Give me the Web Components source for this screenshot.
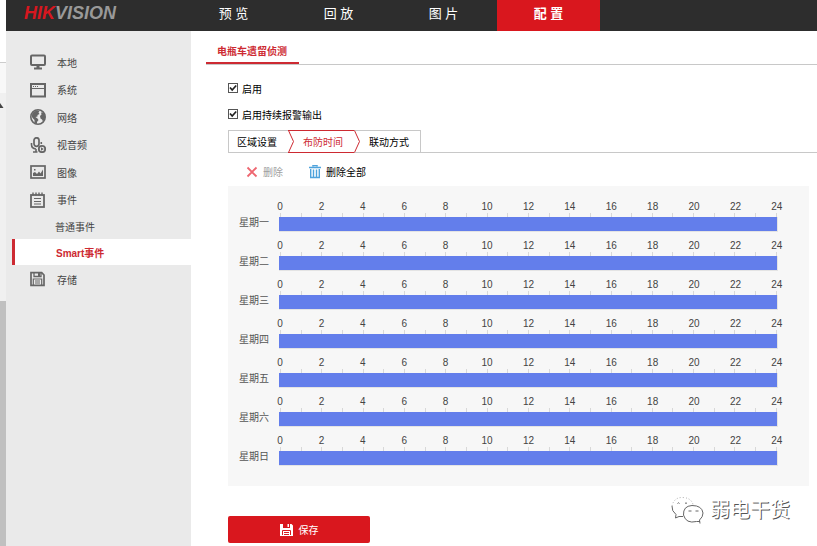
<!DOCTYPE html>
<html lang="zh-CN">
<head>
<meta charset="utf-8">
<title>HIKVISION</title>
<style>
  body {
    margin: 0;
    min-height: 100vh;
    display: flex;
    background: #fff;
    color: #000;
    font-family: "Liberation Sans", "Noto Sans CJK SC", sans-serif;
    font-size: 10px;
  }
  .page {
    flex: 1;
    min-width: 0;
    display: flex;
    flex-direction: column;
  }
  .columns {
    flex: 1;
    display: flex;
  }
</style>
</head>
<body>
<window-edge></window-edge>
<div class="page">
  <top-bar>
    <top-tab>预 览</top-tab>
    <top-tab>回 放</top-tab>
    <top-tab>图 片</top-tab>
    <top-tab active>配 置</top-tab>
  </top-bar>
  <div class="columns">
    <side-menu>
      <side-item icon="monitor">本地</side-item>
      <side-item icon="window">系统</side-item>
      <side-item icon="globe">网络</side-item>
      <side-item icon="mic">视音频</side-item>
      <side-item icon="image">图像</side-item>
      <side-item icon="notepad">事件</side-item>
      <side-item sub>普通事件</side-item>
      <side-item sub active>Smart事件</side-item>
      <side-item icon="disk">存储</side-item>
    </side-menu>
    <config-panel heading="电瓶车遗留侦测">
      <check-option name="enable">启用</check-option>
      <check-option name="alarm">启用持续报警输出</check-option>
      <step-tabs labels="区域设置,布防时间,联动方式" current="1"></step-tabs>
      <schedule-tools></schedule-tools>
      <week-schedule days="星期一,星期二,星期三,星期四,星期五,星期六,星期日"></week-schedule>
      <save-button>保存</save-button>
    </config-panel>
  </div>
</div>
<water-mark>弱电干货</water-mark>

<script>
const ICONS = {
  monitor: `<rect x="1" y="1.500" width="14" height="9.500" rx="1" fill="none" stroke="#666" stroke-width="2"/><path d="M6.500 11h3v2.500H12V15.500H4v-2h2.500z" fill="#666"/>`,
  window: `<rect x="1" y="2" width="14" height="12.500" fill="none" stroke="#666" stroke-width="2"/><path d="M1 6.500h14" stroke="#666"/><path d="M3 4.500h1M5 4.500h1M7 4.500h1" stroke="#666"/>`,
  globe: `<circle cx="8" cy="8" r="7.200" fill="#eaeaea" stroke="#666" stroke-width="1.600"/><path d="M1.500 6.500 3.500 3 7 1.200 9.500 2 8.500 3.500 9.500 5 7.500 6 7.500 7.500 5.500 8 7.500 9.500 8.500 11 7 13 7 15 4.500 13.500 4.500 11 2.500 9z" fill="#666"/><path d="M11 3.500 13.500 3.500 15 6.500 15 9 13 12.500 12 10.500 10.500 9.500 10 7 11.500 5.500z" fill="#666"/>`,
  mic: `<rect x="4" y="0.800" width="5" height="8.500" rx="2.500" fill="none" stroke="#666" stroke-width="1.700"/><path d="M1.500 6v1.500q0 4 4.500 4.500M11.300 5v2M6 12v3M3 15h4.500" fill="none" stroke="#666" stroke-width="1.600"/><circle cx="12" cy="12" r="3.200" fill="#eaeaea" stroke="#666" stroke-width="1.800"/><path d="M11 10.300 13.800 12 11 13.700z" fill="#666"/>`,
  image: `<rect x="1" y="2" width="14" height="12" fill="none" stroke="#666" stroke-width="1.700"/><path d="M3 12V9l2-1 2 2 2-2.500 1.500 2L13 5.500V12z" fill="#666"/><rect x="4" y="5" width="1.500" height="1.500" fill="#666"/>`,
  notepad: `<rect x="1" y="3" width="13" height="12" fill="none" stroke="#666" stroke-width="1.800"/><path d="M3 .500v3M6 .500v3M9 .500v3M12 .500v3" stroke="#666" stroke-width="1.400"/><path d="M4 6.500h7M4 9.500h7M4 12h7" stroke="#666"/>`,
  disk: `<path d="M1 1.700h10.700l2.300 2.300v10.300H1z" fill="none" stroke="#666" stroke-width="1.700"/><path d="M4 1.500v4h7v-4" fill="none" stroke="#666" stroke-width="1.300"/><path d="M8 2h2v3h-2z" fill="#666"/><path d="M3.300 14V8h8.400v6M5 10h5M5 12h5" fill="none" stroke="#666" stroke-width="1.200"/>`
};

// Clones the markup into an open shadow root
function render(el, html) {
  const template = document.createElement("template");
  template.innerHTML = html;
  const root = el.attachShadow({ mode: "open" });
  root.appendChild(template.content.cloneNode(true));
  return root;
}

/* Strip of the browser window left of the page */
class WindowEdge extends HTMLElement {
  connectedCallback() {
    render(this, `
      <style>
        :host { width: 6px; display: flex; flex-direction: column; background: #f0f0f0; }
        .top { height: 62px; background: #fff; border-bottom: 1px solid #ccc; }
        .bar { height: 30px; background: #f8f8f8; }
        .track { box-sizing: border-box; height: 208px; padding-top: 10px; }
        svg { display: block; }
        .thumb { flex: 1; background: #c0c0c0; }
      </style>
      <div class="top"></div>
      <div class="bar"></div>
      <div class="track">
        <svg width="4" height="6" viewBox="0 0 4 6"><path d="M0 0 3.500 5H0z" fill="#444"/></svg>
      </div>
      <div class="thumb"></div>`);
  }
}

class TopBar extends HTMLElement {
  connectedCallback() {
    render(this, `
      <style>
        :host { display: flex; height: 31px; background: #2d2d2d; }
        .logo {
          box-sizing: border-box;
          width: 176px;
          padding-left: 18px;
          font-size: 18px;
          line-height: 27px;
          font-weight: bold;
          font-style: italic;
          color: #999;
        }
        .logo span { color: #d7171f; }
        nav { display: flex; gap: 2px; }
      </style>
      <div class="logo"><span>HIK</span>VISION</div>
      <nav><slot></slot></nav>`);
  }
}

class TopTab extends HTMLElement {
  connectedCallback() {
    render(this, `
      <style>
        :host { display: block; width: 103px; }
        a {
          display: block;
          height: 31px;
          font-size: 13px;
          line-height: 27px;
          text-align: center;
          text-decoration: none;
          color: #fff;
        }
        :host([active]) a { background: #d9171e; font-weight: bold; }
      </style>
      <a href="#"><slot></slot></a>`);
  }
}

class SideMenu extends HTMLElement {
  connectedCallback() {
    render(this, `
      <style>
        :host { display: block; width: 185px; background: #eaeaea; }
        nav {
          display: grid;
          grid-template-rows: 28px 27px 28px 27px 28px 27px 26px 26px 28px;
          padding-top: 17px;
        }
      </style>
      <nav><slot></slot></nav>`);
  }
}

class SideItem extends HTMLElement {
  connectedCallback() {
    const icon = ICONS[this.getAttribute("icon")];
    render(this, `
      <style>
        :host { display: grid; margin-left: 6px; }
        a {
          display: flex;
          align-items: center;
          gap: 11px;
          padding-left: 18px;
          color: #444;
          text-decoration: none;
        }
        :host([sub]) a { padding-left: 43px; }
        :host([active]) a {
          padding-left: 41px;
          border-left: 3px solid #cd2a32;
          background: #fff;
          color: #cd2a32;
          font-weight: bold;
        }
      </style>
      <a href="#">${icon ? `<svg width="16" height="16" viewBox="0 0 16 16" aria-hidden="true">${icon}</svg>` : ""}<slot></slot></a>`);
  }
}

class ConfigPanel extends HTMLElement {
  connectedCallback() {
    render(this, `
      <style>
        :host { display: block; flex: 1; min-width: 0; padding: 11px 0 3px 15px; }
        .heading { display: flex; border-bottom: 1px solid #c8c8c8; }
        a {
          padding: 0 12px 0 11px;
          line-height: 20px;
          border-bottom: 2px solid #cd2a32;
          color: #cd2a32;
          font-weight: bold;
          text-decoration: none;
        }
        .body { padding: 10px 0 0 22px; }
      </style>
      <div class="heading"><a href="#">${this.getAttribute("heading")}</a></div>
      <div class="body"><slot></slot></div>`);
  }
}

class CheckOption extends HTMLElement {
  connectedCallback() {
    const name = this.getAttribute("name");
    render(this, `
      <style>
        :host { display: flex; align-items: center; gap: 4px; height: 26px; }
        input {
          appearance: none;
          width: 10px;
          height: 10px;
          margin: 0;
          box-sizing: border-box;
          border: 1px solid #555;
          background: #fff;
        }
        .box { display: grid; }
        .box > * { grid-area: 1 / 1; }
        svg { pointer-events: none; }
        input:not(:checked) + svg { display: none; }
      </style>
      <span class="box">
        <input type="checkbox" id="${name}" checked>
        <svg width="10" height="10" viewBox="0 0 10 10"><path d="M2 4.500 4.200 7 8.200 2.500" fill="none" stroke="#222" stroke-width="1.700"/></svg>
      </span>
      <label for="${name}"><slot></slot></label>`);
  }
}

/* Tabs joined by chevrons, the current one is outlined in red */
class StepTabs extends HTMLElement {
  connectedCallback() {
    const current = Number(this.getAttribute("current"));
    const labels = this.getAttribute("labels").split(",");
    let html = "";
    labels.forEach((label, i) => {
      if (i > 0) {
        const edge = i === current ? "#cd2a32" : "#c8c8c8";
        const chevron = i === current || i - 1 === current ? "#cd2a32" : "#c8c8c8";
        html += `<svg width="7" height="23" viewBox="0 0 7 23" aria-hidden="true">
          <path d="M0 .500h7M0 22.500h7" stroke="${edge}"/>
          <path d="M.500 .500 5.500 11.500.500 22.500" fill="none" stroke="${chevron}"/>
        </svg>`;
      }
      html += `<button type="button" class="${i === current ? "current" : ""}">${label}</button>`;
    });
    render(this, `
      <style>
        :host { display: flex; align-items: flex-end; margin-top: 3px; }
        .steps { display: flex; border: solid #c8c8c8; border-width: 0 1px; }
        .rest { flex: 1; border-bottom: 1px solid #c8c8c8; }
        button {
          height: 23px;
          padding: 0 11px 0 8px;
          border: solid #c8c8c8;
          border-width: 1px 0;
          background: #fff;
          color: #000;
          font: inherit;
        }
        button.current { border-color: #cd2a32; color: #cd2a32; }
      </style>
      <div class="steps">${html}</div>
      <div class="rest"></div>`);
  }
}

class ScheduleTools extends HTMLElement {
  connectedCallback() {
    render(this, `
      <style>
        :host { display: flex; align-items: center; gap: 26px; height: 29px; padding: 4px 0 0 18px; }
        button {
          display: flex;
          align-items: center;
          gap: 5px;
          padding: 0;
          border: 0;
          background: none;
          color: #000;
          font: inherit;
        }
        button:disabled { color: #a0a0a0; }
      </style>
      <button type="button" disabled>
        <svg width="12" height="12" viewBox="0 0 12 12"><path d="M1.500 1.500 10.500 10.500M10.500 1.500 1.500 10.500" stroke="#ee6670" stroke-width="1.800"/></svg>
        删除
      </button>
      <button type="button">
        <svg width="12" height="14" viewBox="0 0 12 14">
          <path d="M4 1.500V.500h4v1M0 2.500h12" fill="none" stroke="#4fa3dc" stroke-width="1.500"/>
          <path d="M1.700 4v8.500h8.600V4M4.500 4.500v8M7.500 4.500v8" fill="none" stroke="#4fa3dc" stroke-width="1.400"/>
        </svg>
        删除全部
      </button>`);
  }
}

class WeekSchedule extends HTMLElement {
  connectedCallback() {
    const days = this.getAttribute("days").split(",");
    let hours = "";
    for (let h = 0; h <= 24; h += 2) {
      hours += `<span>${h}</span>`;
    }
    const ticks = "<i></i>".repeat(25);
    render(this, `
      <style>
        :host {
          display: flex;
          flex-direction: column;
          gap: 6px;
          margin-right: 8px;
          padding: 13px 31px 20px 11px;
          background: #f7f7f7;
        }
        .day { display: flex; align-items: flex-end; }
        .name { width: 40px; line-height: 18px; color: #555; }
        .axis { flex: 1; }
        .hours { display: flex; justify-content: space-between; height: 14px; line-height: 16px; padding: 0 1px; color: #444; }
        .hours span { width: 0; display: flex; justify-content: center; }
        .ticks { display: flex; justify-content: space-between; height: 4px; padding: 0 1px; }
        .ticks i { width: 1px; background: #d8d8d8; }
        .bar { height: 14px; background: #637eeb; border: solid #e4e4e4; border-width: 0 1px 1px 0; }
      </style>
      ${days.map((day) => `
        <div class="day">
          <div class="name">${day}</div>
          <div class="axis">
            <div class="hours">${hours}</div>
            <div class="ticks">${ticks}</div>
            <div class="bar"></div>
          </div>
        </div>`).join("")}`);
  }
}

class SaveButton extends HTMLElement {
  connectedCallback() {
    render(this, `
      <style>
        :host { display: block; margin-top: 30px; }
        button {
          display: flex;
          align-items: center;
          justify-content: center;
          gap: 6px;
          width: 142px;
          height: 27px;
          padding: 0;
          border: 0;
          border-radius: 2px;
          background: #d9171e;
          color: #fff;
          font: inherit;
        }
      </style>
      <button type="button">
        <svg width="13" height="12" viewBox="0 0 13 12">
          <path d="M0 0h3v4h7V0h1.500L13 1.500V12H0z" fill="#fff"/>
          <path d="M7.500 0h1.500v3H7.500z" fill="#fff"/>
          <path d="M2.500 11V6.500h8V11M4 8.500h5M4 10.500h5" fill="none" stroke="#d9171e"/>
        </svg>
        <slot></slot>
      </button>`);
  }
}

/* Channel mark lying over the bottom right corner */
class WaterMark extends HTMLElement {
  connectedCallback() {
    render(this, `
      <style>
        :host {
          position: absolute;
          right: 27px;
          bottom: 22px;
          display: flex;
          align-items: center;
          gap: 6px;
          font-size: 20px;
          line-height: 28px;
          color: #fff;
          text-shadow: 1px 1px 0 #555;
        }
      </style>
      <svg width="33" height="28" viewBox="0 0 33 28" fill="none">
        <path d="M12 20.500 8 20.500 4.500 22 5 18.500Q.500 15 1 10" stroke="#666"/>
        <path d="M1 10Q3 1.500 11 1.500 20 1.500 22 8.500" stroke="#aaa" stroke-dasharray="1 2"/>
        <path d="M29 25.500 25.500 25.500Q15 28 12.500 19 12 10 21 9.500 31 9.500 32 17 32 21 28.500 24L29 27.500" stroke="#666" fill="#fff"/>
        <path d="M6.500 7.500q1-1.500 2 0M14 7.500q1-1.500 2 0M17.500 15h3M24.500 15h3" stroke="#666"/>
      </svg>
      <span><slot></slot></span>`);
  }
}

customElements.define("window-edge", WindowEdge);
customElements.define("top-bar", TopBar);
customElements.define("top-tab", TopTab);
customElements.define("side-menu", SideMenu);
customElements.define("side-item", SideItem);
customElements.define("config-panel", ConfigPanel);
customElements.define("check-option", CheckOption);
customElements.define("step-tabs", StepTabs);
customElements.define("schedule-tools", ScheduleTools);
customElements.define("week-schedule", WeekSchedule);
customElements.define("save-button", SaveButton);
customElements.define("water-mark", WaterMark);
</script>
</body>
</html>
